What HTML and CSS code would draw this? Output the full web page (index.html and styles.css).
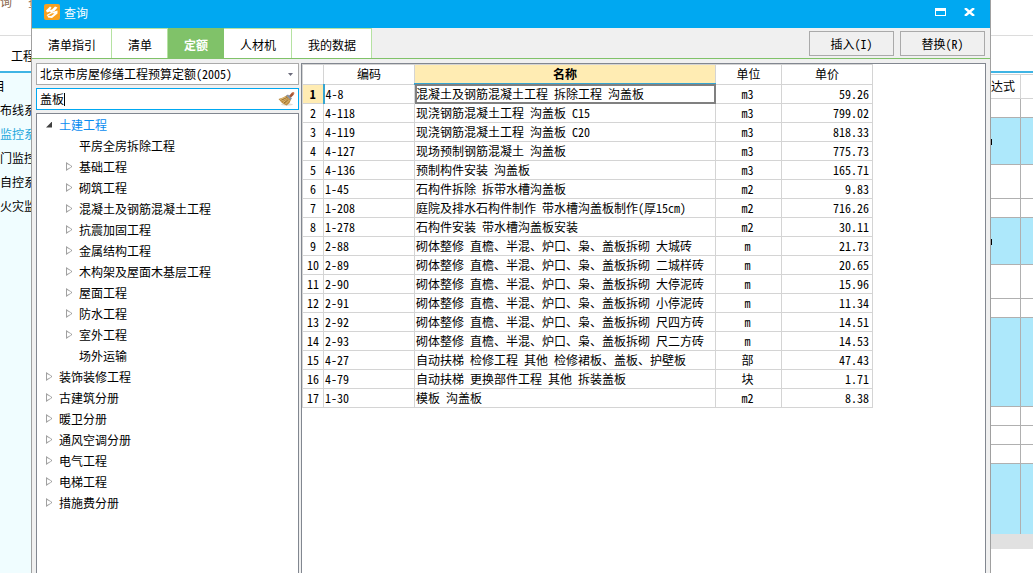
FILE: index.html
```html
<!DOCTYPE html>
<html lang="zh-CN">
<head>
<meta charset="utf-8">
<title>查询</title>
<link rel="stylesheet" href="styles.css">
</head>
<body>
<div class="app">
  <div class="app-ribbon"><span>询</span><span>查</span></div>
  <div class="app-tabs">工程</div>
  <div class="app-body">
    <nav class="app-nav">
      <span>目</span><span>布线系</span><span class="current">监控系</span><span>门监控</span><span>自控系</span><span>火灾监</span>
    </nav>
    <div class="app-grid">
      <div class="g-row g-head"><span>达式</span><span></span></div>
      <div class="g-row"><span></span><span></span></div>
      <div class="g-row mid blue"><span><i class="mark"></i></span><span></span></div>
      <div class="g-row low"><span></span><span></span></div>
      <div class="g-row"><span></span><span></span></div>
      <div class="g-row mid blue"><span><i class="mark"></i></span><span></span></div>
      <div class="g-row low"><span></span><span></span></div>
      <div class="g-row"><span></span><span></span></div>
      <div class="g-row tall blue"><span></span><span></span></div>
      <div class="g-row"><span></span><span></span></div>
      <div class="g-row"><span></span><span></span></div>
      <div class="g-row"><span></span><span></span></div>
      <div class="g-row last blue"><span></span><span></span></div>
      <div class="g-scroll"></div>
    </div>
  </div>
</div>

<section class="dialog" aria-label="查询">
  <header class="titlebar">
    <svg class="logo" viewBox="0 0 16 16" aria-hidden="true">
      <rect width="16" height="16" rx="2" fill="#f9a01f"/>
      <path d="M2 6.500 6 2.500 7.500 3.500 6 6 8 5.500 11 2.500 13.500 3.500 10.500 7 7 8.500 6 7.500 3 8.500z" fill="#fff"/>
      <path d="M6.500 9 10 7.500 13.500 6.500 13.500 9.500 8 14 4 13.500 3.500 11.500 7 12 10.500 9.500z" fill="#fff"/>
      <path d="M3 11.500 8 8.500" stroke="#fff" stroke-width="1.400"/>
    </svg>
    <span class="title">查询</span>
    <button class="win-btn" aria-label="最大化"><svg width="11" height="8" viewBox="0 0 11 8"><path d="M0 0h11v8H0zM1 3v4h9V3z" fill="#fff" fill-rule="evenodd"/></svg></button>
    <button class="win-btn" aria-label="关闭"><svg width="11" height="8" viewBox="0 0 11 8"><path d="M1 0 10 8M10 0 1 8" stroke="#fff" stroke-width="2.400"/></svg></button>
  </header>

  <div class="toolbar">
    <div class="tabs">
      <button class="tab">清单指引</button><button class="tab">清单</button><button class="tab active">定额</button><button class="tab">人材机</button><button class="tab">我的数据</button>
    </div>
    <div class="actions">
      <button class="action">插入(I)</button>
      <button class="action">替换(R)</button>
    </div>
  </div>

  <div class="content">
    <aside class="side">
      <div class="combo">
        <select aria-label="定额库"><option>北京市房屋修缮工程预算定额(2005)</option></select>
        <svg width="5" height="3" viewBox="0 0 5 3" aria-hidden="true"><path d="M0 0h5L2.500 3z" fill="#6b6b7b"/></svg>
      </div>
      <div class="search">
        <label class="search-text"><input type="text" value="盖板" aria-label="搜索" size="4"><i class="caret"></i></label>
        <button class="clear" aria-label="清除">
          <svg width="17" height="14" viewBox="0 0 17 14">
            <ellipse cx="9" cy="12.500" rx="6" ry="1.200" fill="#dedbd5"/>
            <path d="M10.500 4.500 14 0.500 16 1 15.500 3 12.500 6z" fill="#a45535"/>
            <path d="M14 0.500 15.500 0 16.500 1 15.500 3z" fill="#c87550"/>
            <path d="M0.500 7 5 5.500 8.500 3.500 13 7.500 11.500 11 8.500 13.500 4 11z" fill="#bd8c42"/>
            <path d="M8 3.500 10 2.500 14 6.500 12.500 8z" fill="#8791a0"/>
            <path d="M2 7.500 8 5M3.500 9 9 6M5 10.500 10.500 7M7.500 12 11.500 8" stroke="#e8c982" stroke-width=".8"/>
            <path d="M4 8 9 5.500M6 11 10 7.500" stroke="#7c5a28" stroke-width=".6"/>
          </svg>
        </button>
      </div>
      <ul class="tree">
        <li class="open"><i class="arrow"></i>土建工程</li>
        <li class="sub leaf"><i class="arrow"></i>平房全房拆除工程</li>
        <li class="sub"><i class="arrow"></i>基础工程</li>
        <li class="sub"><i class="arrow"></i>砌筑工程</li>
        <li class="sub"><i class="arrow"></i>混凝土及钢筋混凝土工程</li>
        <li class="sub"><i class="arrow"></i>抗震加固工程</li>
        <li class="sub"><i class="arrow"></i>金属结构工程</li>
        <li class="sub"><i class="arrow"></i>木构架及屋面木基层工程</li>
        <li class="sub"><i class="arrow"></i>屋面工程</li>
        <li class="sub"><i class="arrow"></i>防水工程</li>
        <li class="sub"><i class="arrow"></i>室外工程</li>
        <li class="sub leaf"><i class="arrow"></i>场外运输</li>
        <li><i class="arrow"></i>装饰装修工程</li>
        <li><i class="arrow"></i>古建筑分册</li>
        <li><i class="arrow"></i>暖卫分册</li>
        <li><i class="arrow"></i>通风空调分册</li>
        <li><i class="arrow"></i>电气工程</li>
        <li><i class="arrow"></i>电梯工程</li>
        <li><i class="arrow"></i>措施费分册</li>
      </ul>
    </aside>

    <main class="result">
      <table>
        <colgroup><col class="c-no"><col class="c-code"><col class="c-name"><col class="c-unit"><col class="c-price"></colgroup>
        <thead><tr><th></th><th>编码</th><th class="sorted">名称</th><th>单位</th><th>单价</th></tr></thead>
        <tbody>
          <tr class="selected"><th>1</th><td>4-8</td><td>混凝土及钢筋混凝土工程 拆除工程 沟盖板</td><td>m3</td><td>59.26</td></tr>
          <tr><th>2</th><td>4-118</td><td>现浇钢筋混凝土工程 沟盖板 C15</td><td>m3</td><td>799.02</td></tr>
          <tr><th>3</th><td>4-119</td><td>现浇钢筋混凝土工程 沟盖板 C20</td><td>m3</td><td>818.33</td></tr>
          <tr><th>4</th><td>4-127</td><td>现场预制钢筋混凝土 沟盖板</td><td>m3</td><td>775.73</td></tr>
          <tr><th>5</th><td>4-136</td><td>预制构件安装 沟盖板</td><td>m3</td><td>165.71</td></tr>
          <tr><th>6</th><td>1-45</td><td>石构件拆除 拆带水槽沟盖板</td><td>m2</td><td>9.83</td></tr>
          <tr><th>7</th><td>1-208</td><td>庭院及排水石构件制作 带水槽沟盖板制作(厚15cm)</td><td>m2</td><td>716.26</td></tr>
          <tr><th>8</th><td>1-278</td><td>石构件安装 带水槽沟盖板安装</td><td>m2</td><td>30.11</td></tr>
          <tr><th>9</th><td>2-88</td><td>砌体整修 直檐、半混、炉口、枭、盖板拆砌 大城砖</td><td>m</td><td>21.73</td></tr>
          <tr><th>10</th><td>2-89</td><td>砌体整修 直檐、半混、炉口、枭、盖板拆砌 二城样砖</td><td>m</td><td>20.65</td></tr>
          <tr><th>11</th><td>2-90</td><td>砌体整修 直檐、半混、炉口、枭、盖板拆砌 大停泥砖</td><td>m</td><td>15.96</td></tr>
          <tr><th>12</th><td>2-91</td><td>砌体整修 直檐、半混、炉口、枭、盖板拆砌 小停泥砖</td><td>m</td><td>11.34</td></tr>
          <tr><th>13</th><td>2-92</td><td>砌体整修 直檐、半混、炉口、枭、盖板拆砌 尺四方砖</td><td>m</td><td>14.51</td></tr>
          <tr><th>14</th><td>2-93</td><td>砌体整修 直檐、半混、炉口、枭、盖板拆砌 尺二方砖</td><td>m</td><td>14.53</td></tr>
          <tr><th>15</th><td>4-27</td><td>自动扶梯 检修工程 其他 检修裙板、盖板、护壁板</td><td>部</td><td>47.43</td></tr>
          <tr><th>16</th><td>4-79</td><td>自动扶梯 更换部件工程 其他 拆装盖板</td><td>块</td><td>1.71</td></tr>
          <tr><th>17</th><td>1-30</td><td>模板 沟盖板</td><td>m2</td><td>8.38</td></tr>
        </tbody>
      </table>
    </main>
  </div>
</section>
</body>
</html>
```

FILE: styles.css
```css
* { box-sizing: border-box; }
html, body { height: 100%; }
body {
  margin: 0;
  overflow: hidden;
  background: #fff;
  color: #000;
  font: 12px/18px "Noto Sans Mono CJK SC", "Noto Sans CJK SC", monospace;
}
button, input, select {
  margin: 0;
  padding: 0;
  border: 0;
  border-radius: 0;
  background: none;
  color: inherit;
  font: inherit;
}
svg { display: block; }

/* main application behind the dialog */
.app { display: flex; flex-direction: column; height: 100%; white-space: nowrap; }
.app-ribbon {
  display: flex;
  gap: 16px;
  height: 36px;
  border-bottom: 1px solid #dcdcdc;
  color: #8c6a50;
  line-height: 4px;
}
.app-tabs {
  height: 37px;
  padding: 11px 0 0 11px;
  border-bottom: 2px solid #3fb4e4;
}
.app-body { display: flex; justify-content: space-between; flex: 1; min-height: 0; }
.app-nav {
  display: flex;
  flex-direction: column;
  width: 32px;
  padding-top: 1px;
  overflow: hidden;
  background: #f0fdff;
  line-height: 24px;
}
.app-nav span:first-child { margin-left: -7px; }
.app-nav .current { color: #1fa8dc; }
.app-grid { width: 42px; padding-top: 1px; }
.g-row { display: grid; grid-template-columns: 30px 1fr; height: 19px; }
.g-row span { border-bottom: 1px solid #b0b0b0; }
.g-row span:first-child { border-right: 1px solid #b0b0b0; overflow: hidden; }
.g-row.g-head { height: 25px; line-height: 22px; }
.g-row.g-head span { border-color: #d4d4d4; border-top: 1px solid #d4d4d4; }
.g-row.mid { height: 47px; }
.g-row.low { height: 34px; }
.g-row.tall { height: 89px; }
.g-row.last { height: 70px; }
.g-row.last span { border-bottom: 0; }
.blue { background: #ade8fb; }
.mark { display: block; width: 1px; height: 6px; margin-top: 21px; background: #000; }
.g-scroll { height: 15px; background: #e1e1e1; }

/* dialog window */
.dialog {
  position: absolute;
  inset: 0 42px 0 31px;
  display: flex;
  flex-direction: column;
  border: solid #a0a0a0;
  border-width: 0 1px;
  background: #f0f0f0;
}
.titlebar {
  display: flex;
  align-items: center;
  height: 28px;
  padding: 0 15px 4px 12px;
  background: #00a8f1;
  color: #fff;
}
.logo { width: 16px; height: 16px; }
.title { flex: 1; padding: 2px 0 0 4px; }
.win-btn { margin-left: 18px; }

.toolbar {
  display: flex;
  justify-content: space-between;
  height: 31px;
  border-bottom: 1px solid #80c269;
}
.tabs { display: flex; }
.tab {
  padding: 3px 15px 0 16px;
  border: solid #b5e2a2;
  border-width: 1px 1px 0 0;
  background: #fff;
}
.tab.active {
  border-color: #80c269;
  background: #80c269;
  color: #fff;
  font-weight: bold;
}
.actions { display: flex; gap: 6px; padding: 3px 5px 2px 0; }
.action { width: 85px; border: 1px solid #aaa; background: #f0f0f0; }

.content { display: flex; flex: 1; gap: 2px; min-height: 0; padding: 4px 4px 0; }
.side { display: flex; flex-direction: column; gap: 3px; width: 263px; }
.combo, .search {
  display: flex;
  align-items: center;
  flex: none;
  height: 22px;
  border: 1px solid #aaa;
  background: #fff;
}
.combo { padding: 0 5px 0 3px; }
.combo select { flex: 1; appearance: none; }
.search { border-color: #00a8f1; padding: 0 3px 0 3px; justify-content: space-between; }
.search-text { display: flex; align-items: center; }
.search-text input { width: 24px; outline: 0; }
.caret { width: 1px; height: 13px; background: #000; }

.tree {
  flex: 1;
  margin: 0;
  padding: 0 0 0 9px;
  border: 1px solid #828790;
  border-bottom: 0;
  background: #fff;
  list-style: none;
}
.tree li { display: flex; align-items: center; gap: 7px; height: 21px; }
.tree .sub { padding-left: 20px; }
.arrow {
  width: 6px;
  height: 9px;
  background: #a0a0a0;
  clip-path: polygon(evenodd, 0 0, 6px 4px, 6px 5px, 0 9px, 0 0, 1px 2px, 1px 7px, 5px 5px, 5px 4px, 1px 2px);
}
.leaf .arrow { visibility: hidden; }
.open { color: #0a8cf0; }
.open .arrow { height: 6px; background: #404040; clip-path: polygon(100% 0, 100% 100%, 0 100%); }

.result {
  flex: 1;
  overflow: hidden;
  border: 1px solid #828790;
  border-bottom: 0;
  background: #fff;
}
table { width: 571px; border-collapse: collapse; table-layout: fixed; line-height: 18px; }
.c-no { width: 21px; }
.c-code { width: 91px; }
.c-name { width: 301px; }
.c-unit { width: 66px; }
.c-price { width: 91px; }
th, td { height: 19px; padding: 0 3px 0 1px; border: 1px solid #d4d4d4; white-space: nowrap; text-align: left; }
th { padding: 0; font-weight: normal; text-align: center; }
thead th { height: 19px; }
td:nth-child(4) { text-align: center; }
td:nth-child(5) { text-align: right; }
.sorted { border-bottom: 2px solid #35a5d2; background: #ffecb3; font-weight: bold; }
.selected th { border-right: 2px solid #35a5d2; background: #ffecb3; font-weight: bold; }
.selected td:nth-child(3) { outline: 2px solid #808080; outline-offset: -2px; }
```
